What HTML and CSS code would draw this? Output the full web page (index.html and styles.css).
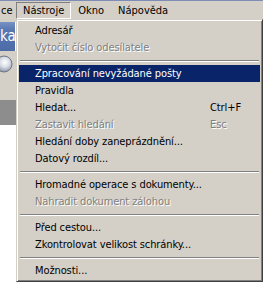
FILE: index.html
```html
<!DOCTYPE html>
<html lang="cs">

<head>
    <meta charset="UTF-8">
    <title>Nástroje</title>
    <link rel="stylesheet" href="styles.css">
</head>

<body>
    <div class="title-edge"></div>
    <div class="menubar">
        <div class="bar-item edge">ce</div>
        <div class="bar-item open">Nástroje</div>
        <div class="bar-item">Okno</div>
        <div class="bar-item">Nápověda</div>
    </div>

    <div class="workspace">
        <div class="behind">
            <div class="gap"></div>
            <div class="blue-tab">ka</div>
            <div class="ball-area">
                <svg width="15" height="49" viewBox="0 0 15 49">
                    <defs>
                        <radialGradient id="shine" cx="0.55" cy="0.4" r="0.6">
                            <stop offset="0" stop-color="#ffffff"/>
                            <stop offset="0.5" stop-color="#d8dde6"/>
                            <stop offset="1" stop-color="#8c96a6"/>
                        </radialGradient>
                    </defs>
                    <circle cx="4" cy="13" r="8" fill="url(#shine)" stroke="#6f7784" stroke-width="1"/>
                </svg>
            </div>
            <div class="dark-block"></div>
            <div class="white-area"></div>
        </div>

        <div class="dropdown">
            <div class="item">Adresář</div>
            <div class="item disabled">Vytočit číslo odesílatele</div>
            <div class="sep"></div>
            <div class="item active">Zpracování nevyžádané pošty</div>
            <div class="item">Pravidla</div>
            <div class="item"><span class="label">Hledat...</span><span class="key">Ctrl+F</span></div>
            <div class="item disabled"><span class="label">Zastavit hledání</span><span class="key">Esc</span></div>
            <div class="item">Hledání doby zaneprázdnění...</div>
            <div class="item">Datový rozdíl...</div>
            <div class="sep"></div>
            <div class="item">Hromadné operace s dokumenty...</div>
            <div class="item disabled">Nahradit dokument zálohou</div>
            <div class="sep"></div>
            <div class="item">Před cestou...</div>
            <div class="item">Zkontrolovat velikost schránky...</div>
            <div class="sep"></div>
            <div class="item">Možnosti...</div>
        </div>
    </div>
</body>

</html>
```

FILE: styles.css
```css
body {
    margin: 0;
    width: 263px;
    height: 284px;
    overflow: hidden;
    background: #ffffff;
    font-family: "DejaVu Sans Condensed", "DejaVu Sans", sans-serif;
    font-stretch: condensed;
    font-size: 11px;
    color: #000;
}

.title-edge {
    height: 1px;
    background: #7d8db5;
}

.menubar {
    display: flex;
    height: 17px;
    padding-top: 1px;
    background: #d4d0c8;
}

.bar-item {
    height: 17px;
    line-height: 15px;
    padding: 0 6px;
    border: 1px solid transparent;
    box-sizing: border-box;
    white-space: nowrap;
}

.bar-item.edge {
    width: 16px;
    padding: 0;
}

.bar-item.open {
    border-color: #808080 #ffffff #ffffff #808080;
}

.workspace {
    display: flex;
}

.behind {
    width: 16px;
    display: flex;
    flex-direction: column;
}

.gap {
    height: 3px;
    background: #d4d0c8;
}

.blue-tab {
    height: 29px;
    width: 15px;
    background: linear-gradient(#7792c6, #5676b0 30%, #4d6ca8);
    color: #fff;
    font-family: "DejaVu Sans Condensed", "DejaVu Sans", sans-serif;
    font-size: 15px;
    line-height: 29px;
    white-space: nowrap;
}

.ball-area {
    height: 49px;
    background: #d4d0c8;
}

.ball-area svg {
    display: block;
}

.dark-block {
    height: 25px;
    background: #8d8d8d;
}

.white-area {
    flex: 1;
    height: 180px;
    background: #fff;
}

.dropdown {
    width: 247px;
    box-sizing: border-box;
    padding: 2px;
    background: #d4d0c8;
    border: 1px solid;
    border-color: #d4d0c8 #404040 #404040 #d4d0c8;
    box-shadow: inset 1px 1px 0 #ffffff, inset -1px -1px 0 #808080;
}

.item {
    display: flex;
    height: 17px;
    line-height: 17px;
    padding-left: 16px;
    white-space: nowrap;
    letter-spacing: -0.1px;
}

.item .label {
    width: 175px;
}

.item.disabled {
    color: #808080;
    text-shadow: 1px 1px 0 #ffffff;
}

.item.active {
    background: #0a246a;
    color: #ffffff;
}

.sep {
    margin: 4px 1px 3px;
    border-top: 1px solid #808080;
    border-bottom: 1px solid #ffffff;
}
```
